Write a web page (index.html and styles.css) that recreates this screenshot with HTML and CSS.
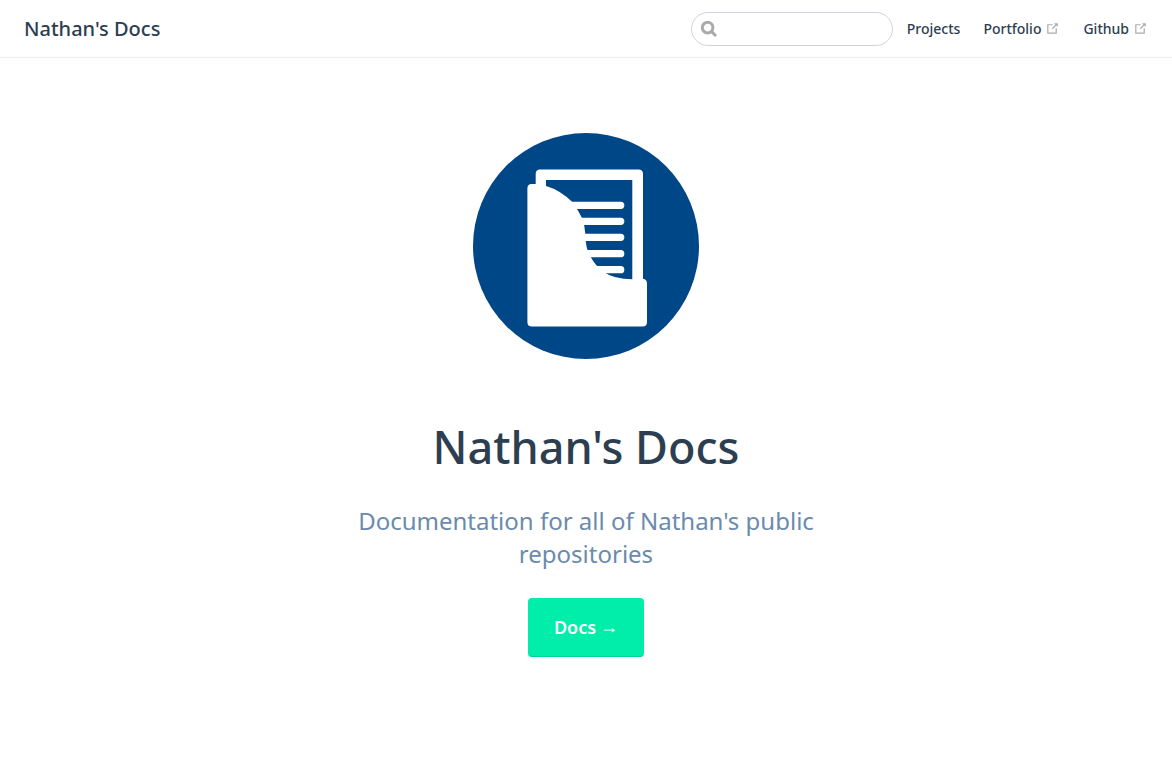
FILE: index.html
```html
<!DOCTYPE html>
<html lang="en">
<head>
<meta charset="utf-8">
<meta name="viewport" content="width=device-width, initial-scale=1">
<title>Nathan's Docs</title>
<link rel="stylesheet" href="styles.css">
</head>
<body>
<header class="navbar">
  <a class="site-name" href="#">Nathan's Docs</a>
  <div class="links">
    <form class="search" role="search">
      <svg class="search-icon" viewBox="0 0 16 16" aria-hidden="true"><circle cx="6.6" cy="6.6" r="5.3"/><path d="M10.4 10.4L15 15"/></svg>
      <input class="search-input" type="search" aria-label="Search" autocomplete="off">
    </form>
    <nav class="nav-links">
      <a class="nav-link" href="#">Projects</a>
      <a class="nav-link" href="#">Portfolio <svg class="outbound" viewBox="0 0 100 100" aria-hidden="true"><path d="M18.8,85.1h56l0,0c2.2,0,4-1.8,4-4v-32h-8v28h-48v-48h28v-8h-32l0,0c-2.2,0-4,1.8-4,4v56C14.8,83.3,16.6,85.1,18.8,85.1z"/><polygon points="45.7,48.7 51.3,54.3 77.2,28.5 77.2,37.2 85.2,37.2 85.2,14.9 62.8,14.9 62.8,22.9 71.5,22.9"/></svg></a>
      <a class="nav-link" href="#">Github <svg class="outbound" viewBox="0 0 100 100" aria-hidden="true"><path d="M18.8,85.1h56l0,0c2.2,0,4-1.8,4-4v-32h-8v28h-48v-48h28v-8h-32l0,0c-2.2,0-4,1.8-4,4v56C14.8,83.3,16.6,85.1,18.8,85.1z"/><polygon points="45.7,48.7 51.3,54.3 77.2,28.5 77.2,37.2 85.2,37.2 85.2,14.9 62.8,14.9 62.8,22.9 71.5,22.9"/></svg></a>
    </nav>
  </div>
</header>
<main class="home">
  <svg class="logo" viewBox="0 0 226 226" role="img" aria-label="Documents in a folder">
    <circle cx="113" cy="113" r="113" fill="#004788"/>
    <path fill="#fff" fill-rule="evenodd" d="M67 36.5H165.5Q170 36.5 170 41V150H62.7V41Q62.7 36.5 67 36.5ZM73 47V150H159.3V47Z"/>
    <path stroke="#fff" stroke-width="7.3" stroke-linecap="round" d="M98 72.3H147.7M98 88.3H147.7M98 104.3H147.7M98 120.7H147.7M98 136.7H147.7"/>
    <path fill="#fff" d="M58.5 51H62.7L73 53Q87 57 99.3 69Q104.5 76 109 85Q112 93 112.3 101Q112.6 117 118 124.5Q122 132 130 138.5Q141 146.3 159.3 146.3L170 145.7Q174 146.5 174 150.5V189Q174 193.5 169.5 193.5H59Q54.4 193.5 54.4 189V55.5Q54.4 51 58.5 51Z"/>
  </svg>
  <h1 class="title">Nathan's Docs</h1>
  <p class="description">Documentation for all of Nathan's public repositories</p>
  <a class="action" href="#">Docs <span class="arrow">→</span></a>
</main>
</body>
</html>
```
FILE: styles.css
```css
* { box-sizing: border-box; }

body {
  margin: 0;
  background: #fff;
  color: #2c3e50;
  font-family: "Segoe UI", "Noto Sans", sans-serif;
  font-size: 16px;
}

a { color: inherit; text-decoration: none; }

.navbar {
  display: flex;
  align-items: center;
  justify-content: space-between;
  height: 58px;
  padding: 0 24px;
  border-bottom: 1px solid #eaecef;
}

.site-name { font-size: 20px; font-weight: 500; }

.links { display: flex; align-items: center; gap: 14px; }

.search { position: relative; display: flex; }

.search-icon {
  position: absolute;
  top: 9px;
  left: 10px;
  width: 16px;
  height: 16px;
  fill: none;
  stroke: #aaa;
  stroke-width: 3;
}

.search-input {
  width: 202px;
  height: 34px;
  padding: 0 8px 0 32px;
  border: 1px solid #cfd4db;
  border-radius: 17px;
  background: transparent;
  color: #4e6e8e;
  font: inherit;
  outline: none;
  appearance: none;
}

.nav-links { display: flex; gap: 23px; }

.nav-link {
  display: flex;
  align-items: center;
  gap: 4px;
  font-size: 14px;
  font-weight: 500;
  white-space: nowrap;
}

.outbound { width: 15px; height: 15px; fill: #aaa; }

.home {
  display: flex;
  flex-direction: column;
  align-items: center;
  max-width: 960px;
  margin: 0 auto;
  padding: 75px 32px 0;
  text-align: center;
}

.logo { display: block; width: 226px; height: 226px; }

.title {
  margin: 58px 0 27px;
  font-size: 45px;
  font-weight: 500;
  line-height: 60px;
}

.description {
  max-width: 480px;
  margin: 0 0 28px;
  color: #6a8bad;
  font-size: 24px;
  line-height: 33px;
}

.action {
  display: flex;
  align-items: center;
  gap: 4px;
  padding: 17px 26px;
  border-bottom: 1px solid #00d69a;
  border-radius: 4px;
  background: #00eeaa;
  color: #fff;
  font-size: 18px;
  font-weight: 600;
  line-height: 24px;
}

.arrow {
  font-family: "Liberation Sans", sans-serif;
  font-size: 18px;
  font-weight: 400;
}
```
